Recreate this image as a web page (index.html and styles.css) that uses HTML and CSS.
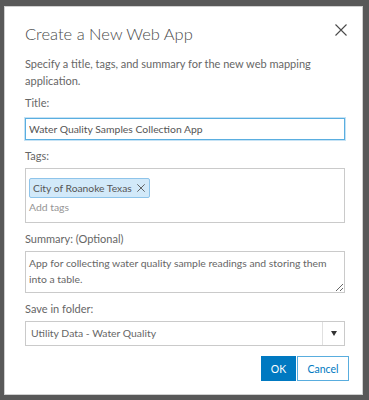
FILE: index.html
```html
<!doctype html>
<html lang="en">
<head>
    <meta charset="UTF-8">
    <title>Create a New Web App</title>
    <link rel="stylesheet" href="styles.css">
</head>
<body>
<div class="dialog">
    <div class="dialog-header">
        <h1 class="dialog-title">Create a New Web App</h1>
        <button class="close-btn" aria-label="Close">
            <svg width="12" height="12" viewBox="0 0 12 12">
                <path d="M0.5 0.5 L11.5 11.5 M11.5 0.5 L0.5 11.5" stroke="#4a4a4a" stroke-width="1.1" fill="none"/>
            </svg>
        </button>
    </div>
    <p class="intro">Specify a title, tags, and summary for the new web mapping application.</p>

    <label class="field-label label-title" for="title">Title:</label>
    <input type="text" id="title" class="text-input focused" value="Water Quality Samples Collection App">

    <label class="field-label">Tags:</label>
    <div class="tags-box">
        <span class="tag">
            <span class="tag-text">City of Roanoke Texas</span>
            <svg width="8" height="8" viewBox="0 0 8 8">
                <path d="M0.3 0.3 L7.7 7.7 M7.7 0.3 L0.3 7.7" stroke="#555555" stroke-width="0.9" fill="none"/>
            </svg>
        </span>
        <span class="tag-placeholder">Add tags</span>
    </div>

    <label class="field-label" for="summary">Summary: (Optional)</label>
    <textarea id="summary" class="summary">App for collecting water quality sample readings and storing them into a table.</textarea>

    <label class="field-label">Save in folder:</label>
    <div class="select">
        <span class="select-value">Utility Data - Water Quality</span>
        <span class="select-arrow">
            <svg width="6" height="5" viewBox="0 0 6 5">
                <path d="M0 0 L6 0 L3 5 Z" fill="#333333"/>
            </svg>
        </span>
    </div>

    <div class="actions">
        <button class="btn btn-primary">OK</button>
        <button class="btn btn-clear">Cancel</button>
    </div>
</div>
</body>
</html>
```

FILE: styles.css
```css
body {
    margin: 0;
    background-color: #595959;
    font-family: Lato, "Open Sans", sans-serif;
    color: #666666;
    height: 400px;
    overflow: hidden;
}

.dialog {
    box-sizing: border-box;
    margin: 6px 0 0 4px;
    width: 359px;
    height: 389px;
    background: #ffffff;
    border: 1px solid #d0d0d0;
    padding: 0 17px 0 20px;
}

.dialog-header {
    display: flex;
    justify-content: space-between;
    align-items: flex-start;
    padding-top: 17px;
}

.dialog-title {
    margin: 0;
    font-size: 16.5px;
    font-weight: 300;
    color: #4a4a4a;
    line-height: 20px;
}

.close-btn {
    border: none;
    background: none;
    padding: 0;
    margin: 0 -2px 0 0;
    width: 12px;
    height: 12px;
    cursor: pointer;
}

.close-btn svg {
    display: block;
}

.intro {
    margin: 11px 0 0;
    font-size: 11px;
    line-height: 17px;
}

.field-label {
    display: block;
    font-size: 11px;
    line-height: 16px;
    margin-top: 8px;
    margin-bottom: 4px;
}

.label-title {
    margin-top: 6px;
    margin-bottom: 7px;
}

.text-input {
    box-sizing: border-box;
    display: block;
    width: 100%;
    height: 22px;
    margin: 0;
    padding: 0 3px;
    font-family: inherit;
    font-size: 10.4px;
    color: #555555;
    border: 1px solid #cacaca;
    outline: none;
}

.text-input.focused {
    border-color: #5aaee0;
    box-shadow: 0 0 0 1px #c6e3f5;
}

.tags-box {
    box-sizing: border-box;
    height: 55px;
    border: 1px solid #cacaca;
    padding: 7px 3px 0;
}

.tag {
    box-sizing: border-box;
    display: inline-flex;
    align-items: center;
    gap: 5px;
    height: 20px;
    padding: 0 4px 0 3px;
    background: #d2e9f9;
    border: 1px solid #8ec4ea;
    border-radius: 2px;
    font-size: 10.3px;
    color: #555555;
    white-space: nowrap;
}

.tag svg {
    display: block;
}

.tag-placeholder {
    display: block;
    font-size: 10.4px;
    color: #959595;
    margin-top: 2px;
    line-height: 14px;
}

.summary {
    box-sizing: border-box;
    display: block;
    width: 100%;
    height: 42px;
    margin: 0;
    padding: 3px 3px;
    font-family: inherit;
    font-size: 10.4px;
    line-height: 16px;
    color: #666666;
    border: 1px solid #cacaca;
    resize: vertical;
    outline: none;
}

.select {
    box-sizing: border-box;
    display: flex;
    height: 25px;
    border: 1px solid #cacaca;
}

.select-value {
    flex: 1;
    padding: 0 5px;
    font-size: 10.4px;
    line-height: 23px;
    color: #666666;
}

.select-arrow {
    display: flex;
    align-items: center;
    justify-content: center;
    width: 21px;
    border-left: 1px solid #e0e0e0;
}

.actions {
    display: flex;
    justify-content: flex-end;
    gap: 1px;
    margin-top: 10px;
    margin-right: -4px;
}

.btn {
    box-sizing: border-box;
    height: 25px;
    padding: 0;
    font-family: inherit;
    font-size: 10.5px;
    cursor: pointer;
}

.btn-primary {
    width: 35px;
    background: #0079c1;
    color: #ffffff;
    border: 1px solid #0079c1;
}

.btn-clear {
    width: 52px;
    background: #ffffff;
    color: #0079c1;
    border: 1px solid #59adde;
}
```
